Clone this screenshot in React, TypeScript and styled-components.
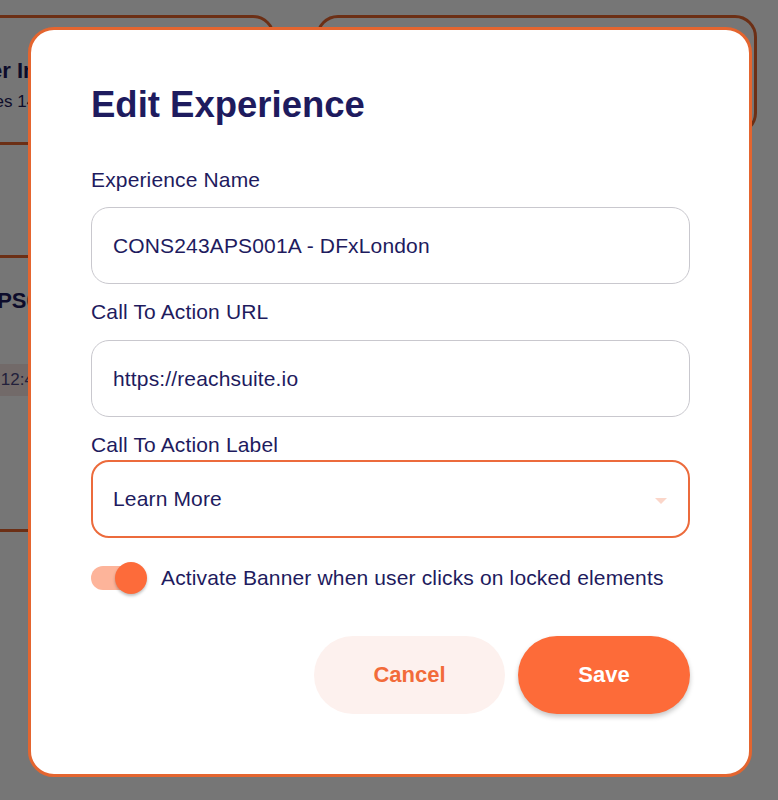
import React from "react";
import styled, { createGlobalStyle } from "styled-components";

const Global = createGlobalStyle`
  html, body { margin: 0; padding: 0; }
  body {
    width: 778px;
    height: 800px;
    overflow: hidden;
    background: #ffffff;
    font-family: "Liberation Sans", Arial, sans-serif;
  }
`;

const Page = styled.div`
  position: relative;
  width: 778px;
  height: 800px;
  overflow: hidden;
  background: #ffffff;
`;

const Board = styled.div`
  display: flex;
  flex-direction: column;
  gap: 110px;
  padding-top: 15px;
`;

const BoardRow = styled.div`
  display: flex;
  gap: 41px;
`;

const Card = styled.div<{ $left: number; $width: number; $height: number; $top?: number }>`
  box-sizing: border-box;
  margin-left: ${(p) => p.$left}px;
  width: ${(p) => p.$width}px;
  height: ${(p) => p.$height}px;
  border: 3px solid #e9672f;
  border-radius: 22px;
  background: #ffffff;
  padding: ${(p) => p.$top ?? 40}px 18px 0;
  display: flex;
  flex-direction: column;
  gap: 8px;
  flex-shrink: 0;
`;

const CardTitle = styled.div`
  font-size: 22px;
  font-weight: 700;
  color: #1e1b5e;
  white-space: nowrap;
`;

const CardMeta = styled.div`
  font-size: 17px;
  color: #1e1b5e;
  white-space: nowrap;
`;

const TimePill = styled.div`
  margin-top: 42px;
  margin-left: 20px;
  align-self: flex-start;
  padding: 6px 10px;
  background: #f6e6e2;
  border-radius: 6px;
  font-size: 17px;
  color: #4b4680;
  white-space: nowrap;
`;

const Overlay = styled.div`
  position: absolute;
  inset: 0;
  background: rgba(0, 0, 0, 0.537);
`;

const Modal = styled.div`
  position: absolute;
  left: 28px;
  top: 27px;
  width: 724px;
  height: 750px;
  box-sizing: border-box;
  background: #ffffff;
  border: 3px solid #e4652f;
  border-radius: 26px;
  padding: 54px 59px 0 60px;
  display: flex;
  flex-direction: column;
  color: #1e1b5e;
`;

const Title = styled.h1`
  margin: 0 0 42px;
  font-size: 36.5px;
  line-height: 42px;
  font-weight: 700;
  color: #1e1b5e;
`;

const Label = styled.label<{ $gap: number }>`
  display: block;
  font-size: 21px;
  letter-spacing: 0.15px;
  line-height: 24px;
  color: #1e1b5e;
  margin-bottom: ${(p) => p.$gap}px;
`;

const Field = styled.div`
  display: flex;
  flex-direction: column;
  margin-bottom: 16px;
`;

const TextBox = styled.div`
  box-sizing: border-box;
  height: 77px;
  border: 1px solid #c9c8ce;
  border-radius: 18px;
  padding: 0 21px;
  display: flex;
  align-items: center;
  font-size: 21px;
  letter-spacing: 0.15px;
  color: #1e1b5e;
`;

const SelectBox = styled.div`
  box-sizing: border-box;
  height: 78px;
  border: 2.5px solid #ec6b3c;
  border-radius: 18px;
  padding: 0 21px 0 20px;
  display: flex;
  align-items: center;
  justify-content: space-between;
  font-size: 21px;
  letter-spacing: 0.15px;
  color: #1e1b5e;
`;

const Caret = styled.span`
  width: 0;
  height: 0;
  border-left: 6px solid transparent;
  border-right: 6px solid transparent;
  border-top: 6px solid #fbd6c9;
  margin-top: 4px;
`;

const ToggleRow = styled.div`
  display: flex;
  align-items: center;
  gap: 14px;
  margin-top: 8px;
  height: 32px;
`;

const Switch = styled.div`
  position: relative;
  width: 56px;
  height: 32px;
  flex-shrink: 0;
`;

const Track = styled.div`
  position: absolute;
  left: 0;
  top: 4px;
  width: 50px;
  height: 24px;
  border-radius: 12px;
  background: #fdb49a;
`;

const Thumb = styled.div`
  position: absolute;
  left: 24px;
  top: 0;
  width: 32px;
  height: 32px;
  border-radius: 50%;
  background: #fd6b3a;
  box-shadow: 0 2px 3px rgba(0, 0, 0, 0.25);
`;

const ToggleText = styled.span`
  font-size: 21px;
  letter-spacing: 0.15px;
  color: #1e1b5e;
  white-space: nowrap;
`;

const Actions = styled.div`
  display: flex;
  justify-content: flex-end;
  gap: 13px;
  margin-top: 42px;
`;

const Button = styled.button<{ $primary?: boolean; $width: number }>`
  width: ${(p) => p.$width}px;
  height: 78px;
  border: none;
  border-radius: 39px;
  font-family: "Liberation Sans", Arial, sans-serif;
  font-size: 22px;
  font-weight: 700;
  background: ${(p) => (p.$primary ? "#fd6b39" : "#fdf1ee")};
  color: ${(p) => (p.$primary ? "#ffffff" : "#f26b3a")};
  box-shadow: ${(p) => (p.$primary ? "0 3px 5px rgba(0,0,0,0.22)" : "none")};
  cursor: pointer;
`;

export default function App() {
  return (
    <Page>
      <Global />
      <Board>
        <BoardRow>
          <Card $left={-86} $width={361} $height={130}>
            <CardTitle>Banner Insights</CardTitle>
            <CardMeta>Messages 14</CardMeta>
          </Card>
          <Card $width={441} $left={0} $height={120} />
        </BoardRow>
        <BoardRow>
          <Card $left={-140} $width={420} $height={277} $top={30}>
            <CardTitle>CONS243APS001A</CardTitle>
            <TimePill>09/05/2024 12:45</TimePill>
          </Card>
        </BoardRow>
      </Board>
      <Overlay />
      <Modal>
        <Title>Edit Experience</Title>
        <Field>
          <Label $gap={15}>Experience Name</Label>
          <TextBox>CONS243APS001A - DFxLondon</TextBox>
        </Field>
        <Field>
          <Label $gap={16}>Call To Action URL</Label>
          <TextBox>https://reachsuite.io</TextBox>
        </Field>
        <Field>
          <Label $gap={3}>Call To Action Label</Label>
          <SelectBox>
            <span>Learn More</span>
            <Caret />
          </SelectBox>
        </Field>
        <ToggleRow>
          <Switch>
            <Track />
            <Thumb />
          </Switch>
          <ToggleText>Activate Banner when user clicks on locked elements</ToggleText>
        </ToggleRow>
        <Actions>
          <Button $width={191}>Cancel</Button>
          <Button $primary $width={172}>Save</Button>
        </Actions>
      </Modal>
    </Page>
  );
}
